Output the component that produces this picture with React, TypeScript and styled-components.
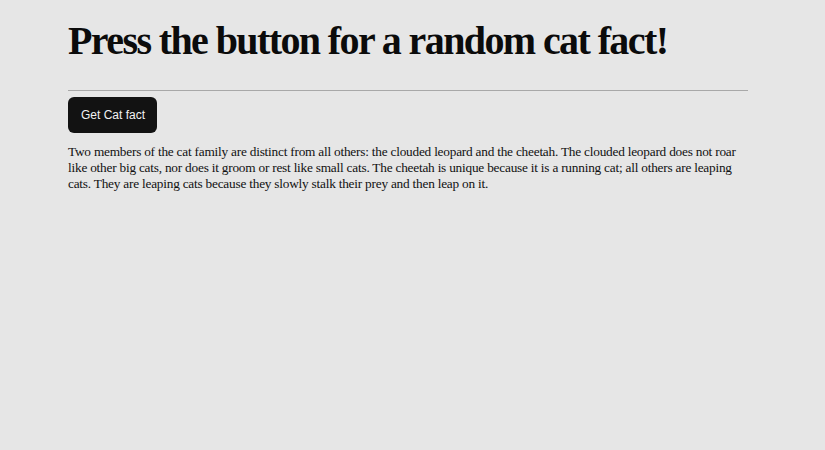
import React from "react";
import styled, { createGlobalStyle } from "styled-components";

const Global = createGlobalStyle`
  html, body { margin: 0; padding: 0; background: #e6e6e6; }
  body { font-family: "Liberation Serif", "DejaVu Serif", serif; color: #111; }
`;

const Page = styled.main`
  width: 680px;
  margin-left: 68px;
  padding-top: 17px;
`;

const Title = styled.h1`
  margin: 0;
  font-family: "Liberation Serif", serif;
  font-weight: 700;
  font-size: 40px;
  line-height: 48px;
  letter-spacing: -1.6px;
  color: #0b0b0b;
`;

const Rule = styled.hr`
  margin: 25px 0 6px;
  border: none;
  border-top: 1px solid #a8a8a8;
  height: 0;
`;

const Button = styled.button`
  display: block;
  height: 36px;
  padding: 0 12px 0 13px;
  border: none;
  border-radius: 6px;
  background: #121212;
  color: #f2f2f2;
  font-family: "Liberation Sans", Arial, sans-serif;
  font-size: 12px;
  cursor: pointer;
`;

const Fact = styled.p`
  margin: 11px 0 0;
  font-family: "Liberation Serif", serif;
  font-size: 13.3px;
  line-height: 16px;
  letter-spacing: -0.22px;
  color: #111;
`;

export default function App() {
  return (
    <>
      <Global />
      <Page>
        <Title>Press the button for a random cat fact!</Title>
        <Rule />
        <Button>Get Cat fact</Button>
        <Fact>
          Two members of the cat family are distinct from all others: the clouded leopard and the cheetah. The clouded leopard does not roar like other big cats, nor does it groom or rest like small cats. The cheetah is unique because it is a running cat; all others are leaping cats. They are leaping cats because they slowly stalk their prey and then leap on it.
        </Fact>
      </Page>
    </>
  );
}
